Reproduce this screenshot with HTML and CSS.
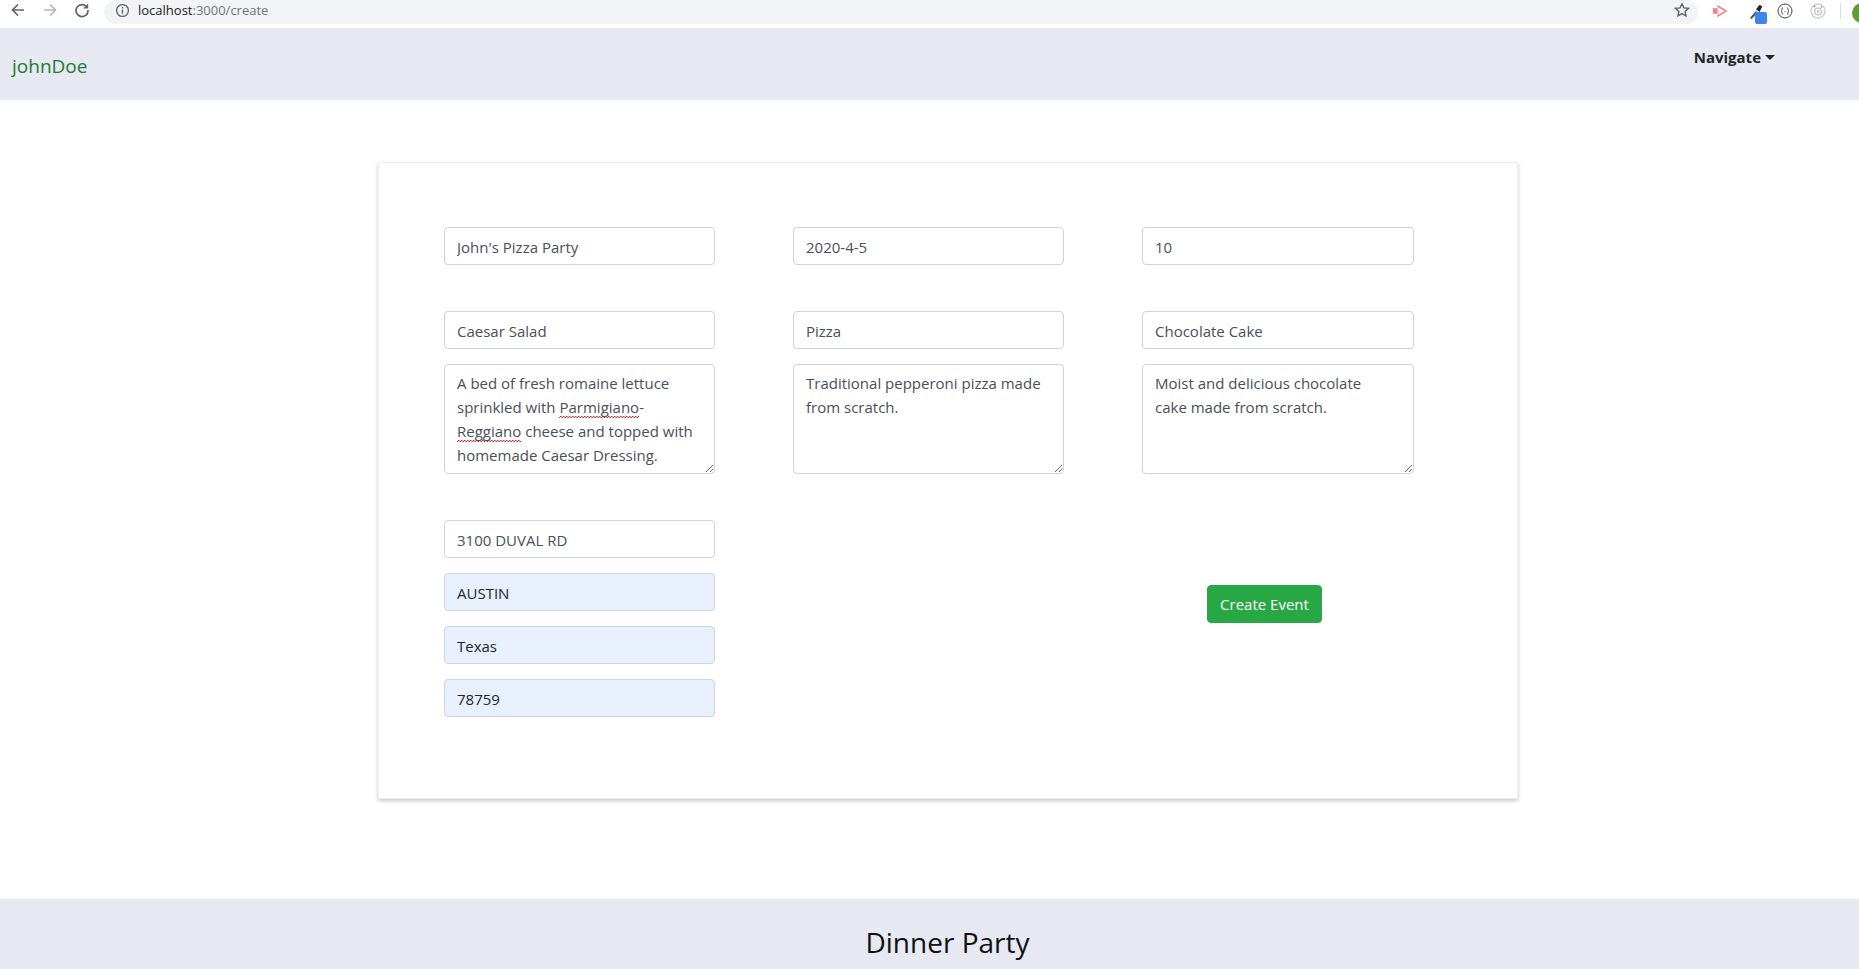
FILE: index.html
```html
<!DOCTYPE html>
<html lang="en">
<head>
  <meta charset="UTF-8">
  <title>Create Event</title>
  <link rel="stylesheet" href="styles.css">
</head>
<body>
  <div class="toolbar">
    <svg class="tool-icon" viewBox="0 0 16 16"><path d="M14 8H3M8 2.500 2.500 8 8 13.500" fill="none" stroke="#5f6368" stroke-width="1.7"/></svg>
    <svg class="tool-icon" viewBox="0 0 16 16"><path d="M2 8h11M8 2.500 13.500 8 8 13.500" fill="none" stroke="#b4b6b9" stroke-width="1.7"/></svg>
    <svg class="tool-icon" viewBox="0 0 16 16"><path d="M13 5.200A6 6 0 1 0 14 8" fill="none" stroke="#5f6368" stroke-width="1.7"/><path d="M14.200 1.500v5h-5z" fill="#5f6368"/></svg>
    <div class="url-bar">
      <svg class="info-icon" viewBox="0 0 16 16"><circle cx="8" cy="8" r="6.300" fill="none" stroke="#5f6368" stroke-width="1.400"/><path d="M8 7v4.500M8 4.300v1.500" stroke="#5f6368" stroke-width="1.500"/></svg>
      <span class="url"><span class="url-host">localhost</span>:3000/create</span>
      <svg class="star-icon" viewBox="0 0 16 16"><path d="m8 1.800 1.900 4.100 4.500.5-3.300 3 .9 4.400L8 11.600l-4 2.200.9-4.400-3.300-3 4.500-.5z" fill="none" stroke="#5f6368" stroke-width="1.400"/></svg>
    </div>
    <div class="extensions">
      <svg class="ext-icon ext-pink" viewBox="0 0 18 16"><path d="M1 5h5V2l10 6-10 6v-3H1z" fill="#f9c3c8"/><path d="M7 4.500 14 8l-7 3.500z" fill="#fff"/><path d="M1 5h5v6H1z" fill="#f47f89"/><path d="M6 2l10 6-10 6" fill="none" stroke="#f47f89" stroke-width="1.600"/></svg>
      <span class="dropper">
        <svg class="ext-icon" viewBox="0 0 16 18"><path d="M1 17l7-8 2 2-7 7z" fill="#4c5a52"/><path d="M8 7l4-5 3 2-3 6z" fill="#20241f"/></svg>
        <span class="dropper-badge"></span>
      </span>
      <svg class="ext-icon ext-braces" viewBox="0 0 16 16"><circle cx="8" cy="8" r="7" fill="none" stroke="#444" stroke-width="1"/><path d="M6 4.500C4.500 4.500 5.500 7.500 4 8c1.500.5.500 3.500 2 3.500M10 4.500c1.500 0 .5 3 2 3.500-1.500.5-.5 3.500-2 3.500M7 8.500h.6M8.700 8.500h.6" fill="none" stroke="#444" stroke-width=".9"/></svg>
      <svg class="ext-icon ext-target" viewBox="0 0 16 16"><circle cx="8" cy="8" r="7" fill="none" stroke="#cfcfcf" stroke-width="1.400"/><circle cx="8" cy="8.500" r="3.400" fill="none" stroke="#c4c4c4" stroke-width="1.400"/><circle cx="8" cy="8.500" r="1.300" fill="#bdbdbd"/><circle cx="4.500" cy="3.500" r="1" fill="#999"/><circle cx="11.500" cy="4" r="1" fill="#aaa"/></svg>
      <span class="ext-divider"></span>
      <span class="avatar"></span>
    </div>
  </div>

  <nav class="navbar">
    <a class="brand" href="#">johnDoe</a>
    <a class="nav-link" href="#">Navigate<span class="caret"></span></a>
  </nav>

  <main class="card">
    <form class="event-form">
      <input class="field" type="text" value="John's Pizza Party">
      <input class="field" type="text" value="2020-4-5">
      <input class="field" type="text" value="10">

      <div class="course">
        <input class="field" type="text" value="Caesar Salad">
        <div class="field field-area">A bed of fresh romaine lettuce sprinkled with <span class="misspelled">Parmigiano</span>-<span class="misspelled">Reggiano</span> cheese and topped with homemade Caesar Dressing.</div>
      </div>
      <div class="course">
        <input class="field" type="text" value="Pizza">
        <div class="field field-area">Traditional pepperoni pizza made from scratch.</div>
      </div>
      <div class="course">
        <input class="field" type="text" value="Chocolate Cake">
        <div class="field field-area">Moist and delicious chocolate cake made from scratch.</div>
      </div>

      <div class="course">
        <input class="field" type="text" value="3100 DUVAL RD">
        <input class="field autofilled" type="text" value="AUSTIN">
        <input class="field autofilled" type="text" value="Texas">
        <input class="field autofilled" type="text" value="78759">
      </div>
      <div></div>
      <div class="submit-cell">
        <button class="btn-create" type="button">Create Event</button>
      </div>
    </form>
  </main>

  <footer class="footer">
    <h2>Dinner Party</h2>
  </footer>
</body>
</html>
```

FILE: styles.css
```css
* {
  box-sizing: border-box;
}

html, body {
  height: 969px;
  overflow: hidden;
}

body {
  margin: 0;
  background: #fff;
  color: #212529;
  font-family: "Open Sans", "Noto Sans", sans-serif;
  font-size: 15px;
  line-height: 24px;
  display: flex;
  flex-direction: column;
}

/* browser chrome */
.toolbar {
  height: 28px;
  flex: none;
  display: flex;
  align-items: flex-start;
  padding-left: 10px;
  background: #fff;
}

.tool-icon {
  width: 16px;
  height: 16px;
  flex: none;
  margin: 2px 16px 0 0;
}

.tool-icon:nth-child(3) {
  margin-right: 14px;
}

.url-bar {
  width: 1594px;
  height: 24px;
  flex: none;
  padding: 0 8px 0 11px;
  display: flex;
  align-items: center;
  gap: 8px;
  background: #f1f3f4;
  border-radius: 12px;
}

.info-icon {
  width: 15px;
  height: 15px;
  position: relative;
  top: -2px;
}

.url {
  flex: 1;
  font-size: 13px;
  color: #70757a;
  position: relative;
  top: -2px;
}

.url-host {
  color: #202124;
}

.star-icon {
  width: 16px;
  height: 16px;
  position: relative;
  top: -2px;
}

.extensions {
  flex: 1;
  display: flex;
  align-items: flex-start;
  padding: 3px 0 0 14px;
}

.ext-icon {
  width: 16px;
  height: 16px;
  flex: none;
  display: block;
}

.dropper {
  position: relative;
  margin-left: 20px;
}

.dropper-badge {
  position: absolute;
  left: 7px;
  top: 9px;
  width: 12px;
  height: 12px;
  border-radius: 2px;
  background: #3f85f0;
}

.ext-braces {
  margin-left: 13px;
}

.ext-target {
  margin-left: 17px;
}

.ext-divider {
  width: 1px;
  height: 16px;
  margin-left: 14px;
  background: #dadce0;
}

.avatar {
  width: 16px;
  height: 20px;
  margin-left: 11px;
  border-radius: 10px 0 0 10px;
  background: #5f9e2f;
}

/* nav */
.navbar {
  height: 72px;
  flex: none;
  display: flex;
  justify-content: space-between;
  align-items: flex-start;
  padding: 0 84px 0 12px;
  background: #e6e9f1;
  border-bottom: 2px solid #e9ecf2;
}

.brand {
  margin-top: 23px;
  font-size: 19px;
  line-height: 30px;
  color: #237a35;
  text-decoration: none;
}

.nav-link {
  margin-top: 17px;
  font-weight: 700;
  color: #212529;
  text-decoration: none;
}

.caret {
  display: inline-block;
  margin-left: 4px;
  vertical-align: 3px;
  border-top: 5px solid #212529;
  border-left: 5px solid transparent;
  border-right: 5px solid transparent;
}

/* form card */
.card {
  width: 1140px;
  height: 637px;
  flex: none;
  margin: 62px 0 0 378px;
  padding: 64px 0 0 65px;
  border: 1px solid #eee;
  border-radius: 2px;
  box-shadow: 0 2px 4px rgba(0, 0, 0, 0.22);
}

.event-form {
  display: grid;
  grid-template-columns: 271px 271px 272px;
  column-gap: 78px;
  row-gap: 46px;
  align-items: start;
}

.course {
  display: flex;
  flex-direction: column;
  gap: 15px;
}

.field {
  display: block;
  width: 100%;
  height: 38px;
  padding: 7px 12px 5px;
  font: inherit;
  color: #495057;
  background: #fff;
  border: 1px solid #ced4da;
  border-radius: 4px;
}

.field-area {
  height: 110px;
  padding: 6px 18px 6px 12px;
  overflow: auto;
  resize: vertical;
}

/* spellcheck squiggle */
.misspelled {
  padding-bottom: 1px;
  background-image:
    linear-gradient(135deg, transparent 40%, #d3202c 40%, #d3202c 60%, transparent 60%),
    linear-gradient(45deg, transparent 40%, #d3202c 40%, #d3202c 60%, transparent 60%);
  background-repeat: repeat-x;
  background-size: 3px 2px;
  background-position: 0 100%, 1.5px 100%;
}

.autofilled {
  background: #e8f0fe;
  color: #212529;
}

.submit-cell {
  padding: 65px 0 0 65px;
}

.btn-create {
  width: 115px;
  height: 38px;
  padding: 0;
  font: inherit;
  color: #fff;
  background: #28a745;
  border: 1px solid #28a745;
  border-radius: 4px;
}

.footer {
  flex: 1;
  margin-top: 100px;
  padding-left: 36px;
  background: #e6e9f1;
  text-align: center;
}

.footer h2 {
  margin: 22px 0 0;
  font-size: 28px;
  line-height: 42px;
  font-weight: 400;
  color: #111;
}
```
